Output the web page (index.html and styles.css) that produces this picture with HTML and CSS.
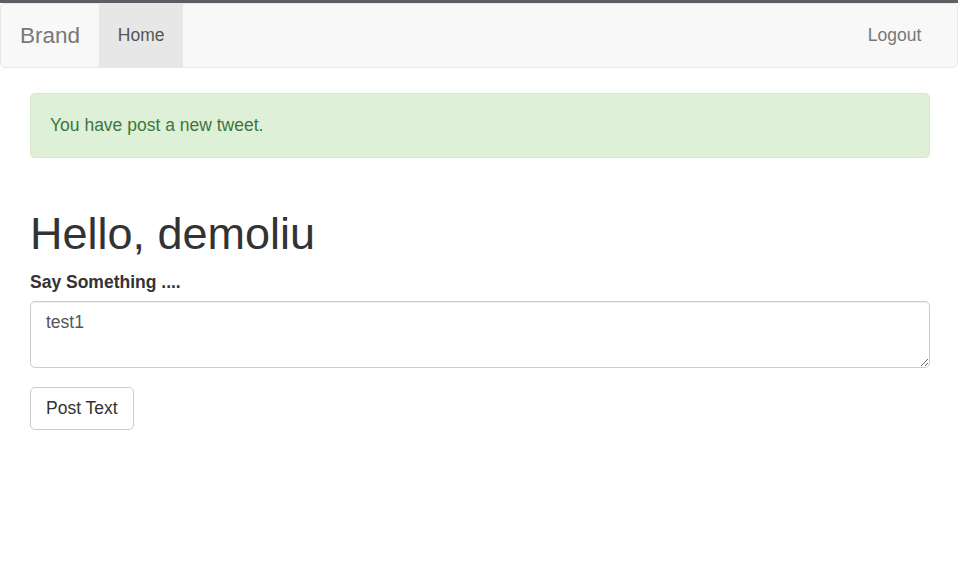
FILE: index.html
```html
<!DOCTYPE html>
<html lang="en">
<head>
<meta charset="utf-8">
<title>Tweets</title>
<link rel="stylesheet" href="styles.css">
</head>
<body>
<div class="topline"></div>
<nav class="navbar">
  <a class="brand" href="#">Brand</a>
  <ul class="nav">
    <li class="active"><a href="#">Home</a></li>
  </ul>
  <ul class="nav nav-right">
    <li><a href="#">Logout</a></li>
  </ul>
</nav>
<main class="container">
  <div class="alert">You have post a new tweet.</div>
  <h1 class="hello">Hello, demoliu</h1>
  <form class="post-form">
    <div class="form-group">
      <label class="label" for="txt">Say Something ....</label>
      <textarea id="txt" class="control">test1</textarea>
    </div>
    <button type="button" class="btn">Post Text</button>
  </form>
</main>
</body>
</html>
```
FILE: styles.css
```css
* { box-sizing: border-box; }
html, body {
  margin: 0;
  padding: 0;
  background: #fff;
  font-family: "Liberation Sans", Arial, sans-serif;
  font-size: 17.5px;
  line-height: 25px;
  color: #333;
}
.topline {
  height: 3px;
  background: #5b5f64;
}
.navbar {
  display: flex;
  align-items: stretch;
  height: 65px;
  background: #f8f8f8;
  border: 1px solid #e7e7e7;
  border-radius: 5px;
}
.brand {
  display: block;
  padding: 0 19px 0 19px;
  font-size: 22.5px;
  line-height: 63px;
  color: #777;
  text-decoration: none;
}
.nav {
  display: flex;
  list-style: none;
  margin: 0;
  padding: 0;
}
.nav li a {
  display: block;
  padding: 0 18.75px;
  line-height: 63px;
  color: #777;
  text-decoration: none;
}
.nav li.active a {
  background: #e7e7e7;
  color: #555;
}
.nav-right {
  margin-left: auto;
  margin-right: 17px;
}
.container {
  padding: 0 28px 0 30px;
}
.alert {
  margin-top: 25px;
  padding: 18.75px 19px;
  background: #dff0d8;
  border: 1px solid #d6e9c6;
  border-radius: 5px;
  color: #3c763d;
}
.hello {
  margin: 51px 0 12px;
  font-size: 45px;
  line-height: 49.5px;
  font-weight: 500;
  color: #333;
}
.post-form {
  margin: 0;
}
.form-group {
  margin-bottom: 19px;
}
.label {
  display: block;
  margin-bottom: 6px;
  font-weight: 700;
}
.control {
  display: block;
  width: 100%;
  height: 67px;
  padding: 7.5px 15px;
  font-family: inherit;
  font-size: 17.5px;
  line-height: 25px;
  color: #555;
  background: #fff;
  border: 1px solid #ccc;
  border-radius: 5px;
  box-shadow: inset 0 1px 1px rgba(0,0,0,.075);
}
.btn {
  display: inline-block;
  padding: 8px 15px;
  font-family: inherit;
  font-size: 17.5px;
  line-height: 25px;
  color: #333;
  background: #fff;
  border: 1px solid #ccc;
  border-radius: 5px;
  cursor: pointer;
}
```
